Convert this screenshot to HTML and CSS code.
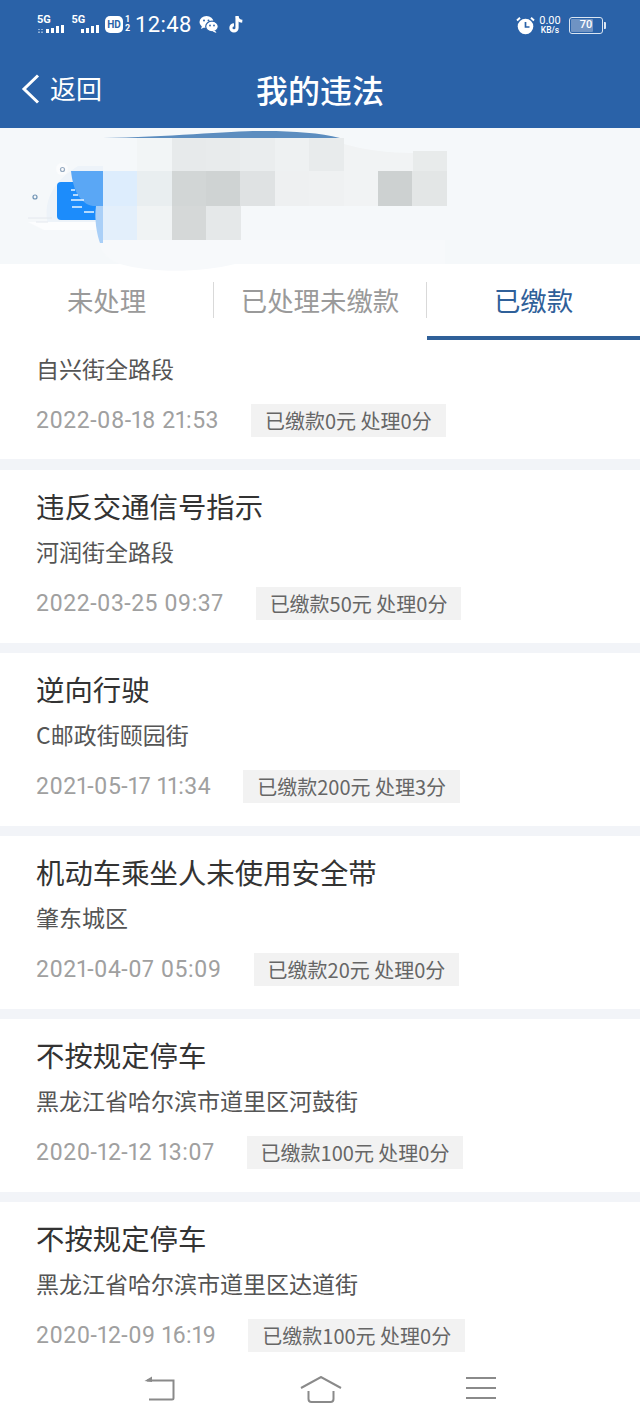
FILE: index.html
```html
<!DOCTYPE html>
<html lang="zh-CN">
<head>
<meta charset="utf-8">
<title>我的违法</title>
<link rel="stylesheet" href="styles.css">
</head>
<body>
<div class="page">
  <header class="top">
    <div class="status">
      <div class="status-left">
        <div class="signal">
          <span class="sig-label">5G</span>
          <svg class="sig-bars" width="27" height="8" viewBox="0 0 27 8"><path d="M0 4h2v1H0zM3 4h2v1H3zM0 6.500h2v1.500H0zM3 6.500h2v1.500H3z" fill="#8fb0d6"/><path d="M8 4h3v4H8zM13 3h3v5h-3zM18 1h3v7h-3zM23 0h3v8h-3z" fill="#fff"/></svg>
        </div>
        <div class="signal">
          <span class="sig-label">5G</span>
          <svg class="sig-bars" width="27" height="8" viewBox="0 0 27 8"><path d="M8 4h3v4H8zM13 3h3v5h-3zM18 1h3v7h-3zM23 0h3v8h-3z" fill="#fff"/></svg>
        </div>
        <div class="hd"><span class="hd-box">HD</span><span class="hd-nums"><span>1</span><span>2</span></span></div>
        <span class="clock">12:48</span>
        <svg class="app-icon" width="20" height="19" viewBox="0 0 20 19">
          <ellipse cx="7.500" cy="7" rx="7" ry="6" fill="#fff"/>
          <path d="M3 11l-1 3 4-2z" fill="#fff"/>
          <ellipse cx="13" cy="11.500" rx="6.300" ry="5.300" fill="#fff" stroke="#2a62a8" stroke-width="1.200"/>
          <path d="M16 15.500l1.500 2.500-4-1.500z" fill="#fff"/>
          <circle cx="5" cy="5.500" r="1" fill="#2a62a8"/><circle cx="9.500" cy="5.500" r="1" fill="#2a62a8"/>
          <circle cx="11" cy="10.500" r=".9" fill="#2a62a8"/><circle cx="15" cy="10.500" r=".9" fill="#2a62a8"/>
        </svg>
        <svg class="app-icon tiktok" width="17" height="19" viewBox="0 0 16 18">
          <path d="M8.500 1v11.200a2.900 2.900 0 1 1-2.900-2.900" fill="none" stroke="#fff" stroke-width="3"/>
          <path d="M8.500 1.500c.4 2.600 2.200 4.200 5 4.500" fill="none" stroke="#fff" stroke-width="2.800"/>
        </svg>
      </div>
      <div class="status-right">
        <svg width="19" height="19" viewBox="0 0 19 19">
          <circle cx="9.500" cy="10.500" r="7.800" fill="#fff"/>
          <path d="M1 4.500 4 1.800M18 4.500 15 1.800" stroke="#fff" stroke-width="2" fill="none"/>
          <path d="M9.500 6v5h4" stroke="#2a62a8" stroke-width="1.700" fill="none"/>
        </svg>
        <div class="speed"><span class="speed-num">0.00</span><span class="speed-unit">KB/s</span></div>
        <div class="battery"><div class="battery-shell"><span class="battery-fill"></span><span class="battery-num">70</span></div><span class="battery-cap"></span></div>
      </div>
    </div>
    <nav class="nav">
      <div class="back">
        <svg width="20" height="32" viewBox="0 0 20 32"><path d="M17 2.500 3 16l14 13.500" fill="none" stroke="#fff" stroke-width="3"/></svg>
        <span>返回</span>
      </div>
      <h1 class="title">我的违法</h1>
    </nav>
  </header>

  <section class="banner">
    <svg class="banner-art" width="640" height="150" viewBox="0 0 640 150">
      <defs><filter id="soft" x="-5%" y="-5%" width="110%" height="110%"><feGaussianBlur stdDeviation="0.7"/></filter></defs>
      <g filter="url(#soft)">
        <path d="M100 112h345v24H235c-35 9-85 9-115 0-15-6-20-14-20-24z" fill="#f7f9fb"/>
        <path d="M47 92C44 70 55 52 78 38h25v60H50z" fill="#edf3f9"/>
        <path d="M28 94h75v8H44z" fill="#fcfdfe"/>
        <path d="M28 90h24M36 94h12" stroke="#e4e9ee" stroke-width="1" fill="none"/>
        <circle cx="62" cy="41" r="6" fill="#fbfcfd"/>
        <rect x="57" y="54" width="60" height="38" rx="4" fill="#1b8cfb"/>
        <path d="M71 43h32v35H93C80 76 73 62 71 43z" fill="#5aa7f5"/>
        <path d="M96 78h7v37h-3c-3-8-6-24-4-37z" fill="#a9cff7"/>
        <path d="M71 62h4M73 67h5M71 72h13M72 79h10M84 84h10" stroke="#e8f4ff" stroke-width="1.500" fill="none"/>
        <circle cx="62.500" cy="41.500" r="2" fill="none" stroke="#96aac0" stroke-width="1.200"/>
        <circle cx="35" cy="69" r="2" fill="none" stroke="#6f93b4" stroke-width="1.200"/>
        <path d="M103 10C170 9 240 2 265 3c30 0 55 2 75 7z" fill="#5c8dbf"/>
        <rect x="103" y="10" width="35" height="34" fill="#f5f8fa"/><rect x="137" y="10" width="35" height="34" fill="#f2f5f6"/>
        <rect x="172" y="10" width="35" height="34" fill="#e7eaeb"/><rect x="206" y="10" width="35" height="34" fill="#e8ebec"/>
        <rect x="240" y="10" width="35" height="34" fill="#eaedee"/><rect x="275" y="10" width="35" height="34" fill="#eef1f2"/>
        <rect x="309" y="10" width="35" height="34" fill="#e8ebec"/><rect x="413" y="23" width="34" height="21" fill="#e8ebeb"/>
        <path d="M344 16c20 6 45 9 69 9v19h-69z" fill="#f1f3f4"/>
        <rect x="103" y="43" width="35" height="35" fill="#ddedfd"/><rect x="137" y="43" width="35" height="35" fill="#e9eef0"/>
        <rect x="172" y="43" width="35" height="35" fill="#d2d6d6"/><rect x="206" y="43" width="35" height="35" fill="#cfd3d3"/>
        <rect x="240" y="43" width="35" height="35" fill="#dfe2e3"/><rect x="275" y="43" width="35" height="35" fill="#eef0f1"/>
        <rect x="309" y="43" width="35" height="35" fill="#eff1f2"/><rect x="344" y="43" width="35" height="35" fill="#f1f3f4"/>
        <rect x="378" y="43" width="35" height="35" fill="#cdd1d1"/><rect x="412" y="43" width="35" height="35" fill="#e3e6e6"/>
        <rect x="103" y="78" width="35" height="34" fill="#e3effb"/><rect x="137" y="78" width="35" height="34" fill="#f0f3f4"/>
        <rect x="172" y="78" width="35" height="34" fill="#d5d8d8"/><rect x="206" y="78" width="35" height="34" fill="#e5e8e9"/>
      </g>
    </svg>
  </section>

  <div class="tabs">
    <div class="tab">未处理</div>
    <div class="tab tab-mid">已处理未缴款</div>
    <div class="tab tab-active">已缴款</div>
  </div>

  <main class="list">
    <article class="card card-first">
      <p class="place">自兴街全路段</p>
      <div class="meta"><span class="date">2022-08-18 21:53</span><span class="tag">已缴款0元 处理0分</span></div>
    </article>
    <article class="card">
      <h2 class="name">违反交通信号指示</h2>
      <p class="place">河润街全路段</p>
      <div class="meta"><span class="date">2022-03-25 09:37</span><span class="tag">已缴款50元 处理0分</span></div>
    </article>
    <article class="card">
      <h2 class="name">逆向行驶</h2>
      <p class="place">C邮政街颐园街</p>
      <div class="meta"><span class="date">2021-05-17 11:34</span><span class="tag">已缴款200元 处理3分</span></div>
    </article>
    <article class="card">
      <h2 class="name">机动车乘坐人未使用安全带</h2>
      <p class="place">肇东城区</p>
      <div class="meta"><span class="date">2021-04-07 05:09</span><span class="tag">已缴款20元 处理0分</span></div>
    </article>
    <article class="card">
      <h2 class="name">不按规定停车</h2>
      <p class="place">黑龙江省哈尔滨市道里区河鼓街</p>
      <div class="meta"><span class="date">2020-12-12 13:07</span><span class="tag">已缴款100元 处理0分</span></div>
    </article>
    <article class="card">
      <h2 class="name">不按规定停车</h2>
      <p class="place">黑龙江省哈尔滨市道里区达道街</p>
      <div class="meta"><span class="date">2020-12-09 16:19</span><span class="tag">已缴款100元 处理0分</span></div>
    </article>
  </main>

  <footer class="sysbar">
    <svg width="32" height="26" viewBox="0 0 32 26"><path d="M4 4.500h26.500v17.500a1.500 1.500 0 0 1-1.500 1.500H6" fill="none" stroke="#8a8a8a" stroke-width="2"/><path d="M1.500 5 9 0.500V6z" fill="#8a8a8a"/></svg>
    <svg width="42" height="28" viewBox="0 0 42 28"><path d="M1 12 21 1l20 11" fill="none" stroke="#8a8a8a" stroke-width="2"/><path d="M8.500 15v8a3 3 0 0 0 3 3h19a3 3 0 0 0 3-3v-8" fill="none" stroke="#8a8a8a" stroke-width="2"/></svg>
    <svg width="30" height="24" viewBox="0 0 30 24"><path d="M0 2h30M0 12h30M0 22h30" stroke="#8a8a8a" stroke-width="2" fill="none"/></svg>
  </footer>
</div>
</body>
</html>
```

FILE: styles.css
```css
* { box-sizing: border-box; }
html, body { margin: 0; padding: 0; background: #fff; }
body { font-family: "Noto Sans CJK SC", "Noto Sans", sans-serif; }
.page { width: 640px; height: 1427px; display: flex; flex-direction: column; overflow: hidden; background: #f2f4f8; }

.top { background: #2a62a8; height: 128px; color: #fff; flex: none; }
.status { height: 50px; padding: 14px 34px 0 37px; display: flex; justify-content: space-between; align-items: flex-start; }
.status-left { display: flex; align-items: flex-start; }
.status-right { display: flex; align-items: flex-start; padding-top: 2px; }
.signal { width: 34.500px; display: flex; flex-direction: column; height: 20px; font-family: Roboto, sans-serif; }
.sig-label { font-size: 11px; line-height: 11px; font-weight: 700; }
.sig-bars { margin-top: 0; margin-left: 1px; }
.hd { display: flex; align-items: center; height: 20px; }
.hd-box { background: #fff; color: #2a62a8; font: 700 10px/17px Roboto, sans-serif; border-radius: 5px; width: 18px; text-align: center; margin-left: -1px; }
.hd-nums { display: flex; flex-direction: column; font: 700 9px/9px Roboto, sans-serif; margin-left: 2px; width: 6px; }
.clock { font: 400 22px/22px Roboto, sans-serif; margin-left: 4px; letter-spacing: .4px; }
.app-icon { margin-left: 7px; margin-top: 1px; }
.tiktok { margin-left: 9px; }
.speed { display: flex; flex-direction: column; align-items: center; margin-left: 3px; width: 24px; font-family: Roboto, sans-serif; }
.speed-num { font-size: 11px; line-height: 10px; }
.speed-unit { font-size: 8.500px; line-height: 9px; font-weight: 500; }
.battery { display: flex; align-items: center; margin-left: 7px; height: 18px; }
.battery-shell { position: relative; width: 34px; height: 17px; border: 1.500px solid #dbe6f2; border-radius: 3px; overflow: hidden; display: flex; align-items: center; justify-content: center; }
.battery-fill { position: absolute; left: 1px; top: 1px; bottom: 1px; width: 70%; background: #6f93c3; border-radius: 1px; }
.battery-num { position: relative; font: 500 11px/14px Roboto, sans-serif; }
.battery-cap { width: 2px; height: 7px; background: #dbe6f2; margin-left: 1px; border-radius: 0 1px 1px 0; }

.nav { position: relative; height: 78px; display: flex; align-items: center; justify-content: center; }
.back { position: absolute; left: 21px; top: 21px; display: flex; align-items: center; gap: 9px; font-size: 26px; line-height: 36px; }
.back span { position: relative; top: -1px; }
.title { margin: 0; font-size: 32px; line-height: 44px; font-weight: 500; }

.banner { position: relative; z-index: 1; height: 136px; background: #f5f8fa; flex: none; }
.banner-art { position: absolute; left: 0; top: 0; display: block; }

.tabs { position: relative; height: 76px; display: grid; grid-template-columns: 213px 214px 213px; background: #fff; flex: none; align-items: start; }
.tab { height: 76px; padding-top: 12px; text-align: center; font-size: 26.400px; line-height: 48px; color: #9a9a9a; position: relative; }
.tab-mid::before, .tab-mid::after { content: ""; position: absolute; top: 18px; height: 36px; width: 1px; background: #d9d9d9; }
.tab-mid::before { left: 0; }
.tab-mid::after { right: 0; }
.tab-active { color: #2f6099; border-bottom: 4px solid #2f6099; }

.list { flex: 1; min-height: 0; overflow: hidden; display: flex; flex-direction: column; gap: 10px; }
.card { background: #fff; flex: none; height: 173px; padding: 16px 36px 0; }
.card-first { height: 119px; padding-top: 10px; margin-bottom: 1px; }
.name { margin: 0; font-size: 28.400px; line-height: 40px; font-weight: 400; color: #333; }
.place { margin: 9px 0 0; font-size: 23px; line-height: 33px; color: #555; }
.card-first .place { margin-top: 2px; }
.meta { display: flex; align-items: center; margin-top: 19px; }
.date { font: 400 23px/33px Roboto, sans-serif; font-variant-numeric: proportional-nums; letter-spacing: .5px; color: #a0a0a0; white-space: nowrap; position: relative; }
.tag { margin-left: 32px; height: 33px; padding: 0 14px; background: #f2f2f2; color: #666; font-size: 20px; line-height: 33px; white-space: nowrap; }

.sysbar { flex: none; height: 67px; background: #fff; display: flex; justify-content: space-between; align-items: flex-start; padding: 16px 144px 0 143px; }
```
